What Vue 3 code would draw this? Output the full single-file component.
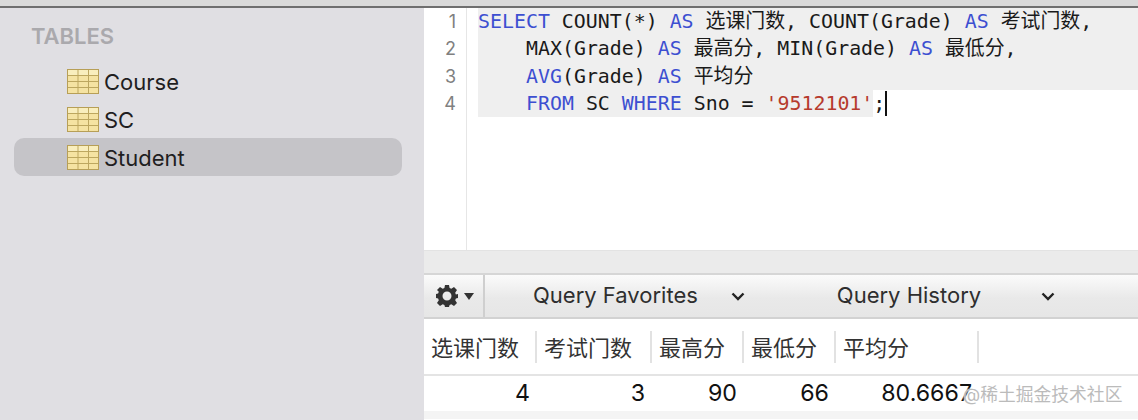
<script setup>
const tables = [
  { name: 'Course', selected: false },
  { name: 'SC', selected: false },
  { name: 'Student', selected: true },
]
const columns = [
  { title: '选课门数', value: '4', width: 113 },
  { title: '考试门数', value: '3', width: 115 },
  { title: '最高分', value: '90', width: 92 },
  { title: '最低分', value: '66', width: 92 },
  { title: '平均分', value: '80.6667', width: 143 },
]
const lineNumbers = [1, 2, 3, 4]
</script>

<template>
  <div class="window">
    <div class="topbar"></div>
    <div class="body">
      <aside class="sidebar">
        <div class="section">TABLES</div>
        <ul class="list">
          <li v-for="t in tables" :key="t.name" class="item" :class="{ selected: t.selected }">
            <svg class="table-icon" width="32" height="25" viewBox="0 0 32 25">
              <rect x="0.5" y="0.5" width="31" height="24" fill="#f5e3a2" stroke="#b79f57" />
              <rect x="1" y="1" width="30" height="5" fill="#f9eebd" />
              <path d="M1 6.5H31M1 12.5H31M1 18.5H31M11 1V24M21.5 1V24" stroke="#bda75f" fill="none" />
            </svg>
            <span class="item-name">{{ t.name }}</span>
          </li>
        </ul>
      </aside>
      <main class="main">
        <section class="editor">
          <div class="gutter">
            <div v-for="n in lineNumbers" :key="n" class="num">{{ n }}</div>
          </div>
          <div class="code">
            <div class="line sel"><span class="kw">SELECT</span> COUNT(*) <span class="kw">AS</span> 选课门数, COUNT(Grade) <span class="kw">AS</span> 考试门数,</div>
            <div class="line sel indent">MAX(Grade) <span class="kw">AS</span> 最高分, MIN(Grade) <span class="kw">AS</span> 最低分,</div>
            <div class="line sel indent"><span class="kw">AVG</span>(Grade) <span class="kw">AS</span> 平均分</div>
            <div class="line"><span class="sel-inline"><span class="kw">FROM</span> SC <span class="kw">WHERE</span> Sno = <span class="str">'9512101'</span></span><span>;</span><span class="caret"></span></div>
          </div>
        </section>
        <div class="splitter"></div>
        <div class="toolbar">
          <div class="gear-btn">
            <svg width="22" height="22" viewBox="0 0 22 22">
              <path fill="#333" fill-rule="evenodd" d="M9 0h4l.6 3.1 1.7.7L18 2l3 3-1.800 2.700.7 1.700L22 9v4l-2.100.6-.7 1.700L21 18l-3 3-2.700-1.800-1.700.7L13 22H9l-.6-2.100-1.700-.7L4 21l-3-3 1.800-2.700-.7-1.700L0 13V9l2.100-.6.7-1.700L1 5l3-3 2.700 1.800 1.700-.7L9 0zm2 6.500a4.500 4.500 0 1 0 0 9 4.500 4.500 0 0 0 0-9z" />
            </svg>
            <svg class="tri" width="10" height="7" viewBox="0 0 10 7"><path d="M0 0h10L5 7z" fill="#333" /></svg>
          </div>
          <div class="tool favorites">
            <span class="tool-label">Query Favorites</span>
            <svg width="14" height="9" viewBox="0 0 14 9"><path d="M1.500 1.500L7 7l5.500-5.500" fill="none" stroke="#222" stroke-width="2.400" /></svg>
          </div>
          <div class="tool history">
            <span class="tool-label">Query History</span>
            <svg width="14" height="9" viewBox="0 0 14 9"><path d="M1.500 1.500L7 7l5.500-5.500" fill="none" stroke="#222" stroke-width="2.400" /></svg>
          </div>
        </div>
        <div class="results">
          <div class="row head">
            <div v-for="c in columns" :key="c.title" class="th" :style="{ width: c.width + 'px' }">{{ c.title }}</div>
          </div>
          <div class="row data">
            <div v-for="c in columns" :key="c.title" class="td" :style="{ width: c.width + 'px' }">{{ c.value }}</div>
          </div>
          <div class="stripe"></div>
          <div class="watermark">@稀土掘金技术社区</div>
        </div>
      </main>
    </div>
  </div>
</template>

<style>
html, body { margin: 0; background: #fff; overflow: hidden; }
</style>

<style scoped>
.window { width: 1138px; height: 420px; display: flex; flex-direction: column; overflow: hidden; font-family: "Inter", "Noto Sans CJK SC", sans-serif; }
.topbar { height: 6px; background: #dadada; border-bottom: 2px solid #6f6f6f; flex: none; }
.body { flex: 1; display: flex; min-height: 0; }
.sidebar { width: 424px; flex: none; background: #e0dfe3; box-sizing: border-box; padding: 15px 22px 0 14px; }
.section { font-size: 22px; line-height: 26px; font-weight: 600; color: #aaa9ad; padding-left: 17px; }
.list { list-style: none; margin: 13px 0 0; padding: 0; }
.item { height: 38px; border-radius: 10px; display: flex; align-items: center; gap: 5px; padding-left: 53px; font-size: 22px; color: #1f1e21; }
.item-name { padding-top: 2px; }
.item.selected { background: #c5c4c8; }
.table-icon { flex: none; }
.main { flex: 1; min-width: 0; display: flex; flex-direction: column; background: #fff; }
.editor { height: 242px; flex: none; display: flex; font-family: "DejaVu Sans Mono", "Noto Sans CJK SC", monospace; font-size: 19.900px; }
.gutter { width: 43px; flex: none; box-sizing: border-box; border-right: 1px solid #e6e6e6; padding: 0 10px 0 0; margin-right: 11px; font-family: "Inter", sans-serif; font-size: 18px; color: #808080; text-align: right; }
.num { height: 27.300px; line-height: 27.300px; }
.code { flex: 1; min-width: 0; color: #1a1a1a; }
.line { height: 27.300px; line-height: 27.300px; white-space: pre; display: flex; padding-left: 48px; box-sizing: border-box; }
.line.sel { display: block; background: #efefef; }
.line.sel:first-child { padding-left: 0; }
.sel-inline { background: #efefef; margin-left: -48px; padding-left: 48px; }
.kw { color: #3d4fd1; }
.str { color: #b63a2c; }
.caret { width: 2px; height: 25px; background: #111; margin-top: 1px; }
.splitter { height: 22px; flex: none; background: #ebebeb; border-top: 1px solid #e3e3e3; }
.toolbar { height: 46px; flex: none; box-sizing: border-box; display: flex; align-items: center; border-top: 2px solid #d6d6d6; border-bottom: 2px solid #d2d2d2; background: linear-gradient(#fbfbfb, #e9e9e9 55%, #e6e6e6); position: relative; font-size: 22px; color: #2e2e2e; }
.tool-label { padding-bottom: 2px; }
.gear-btn { width: 61px; height: 100%; flex: none; box-sizing: border-box; display: flex; align-items: center; gap: 6px; padding-left: 12px; border-right: 2px solid #cfcfcf; }
.tool { display: flex; align-items: center; }
.favorites { margin-left: 48px; gap: 33px; }
.history { margin-left: 92px; gap: 60px; }
.results { flex: 1; min-height: 0; position: relative; background: #fff; font-size: 22px; color: #222; }
.row { display: flex; }
.head { height: 57px; box-sizing: border-box; padding-top: 12px; border-bottom: 2px solid #e4e4e4; }
.th { height: 32px; line-height: 34px; box-sizing: border-box; padding-left: 7px; border-right: 2px solid #e2e2e2; color: #333; white-space: nowrap; }
.data { height: 35px; }
.td { line-height: 35px; box-sizing: border-box; text-align: right; padding-right: 7px; color: #111; font-size: 23.200px; }
.stripe { height: 8px; background: #f4f4f4; }
.watermark { position: absolute; left: 539px; top: 64px; font-size: 17.800px; line-height: 24px; color: #bbb; white-space: nowrap; text-shadow: 0 0 2px #fff; }
</style>
